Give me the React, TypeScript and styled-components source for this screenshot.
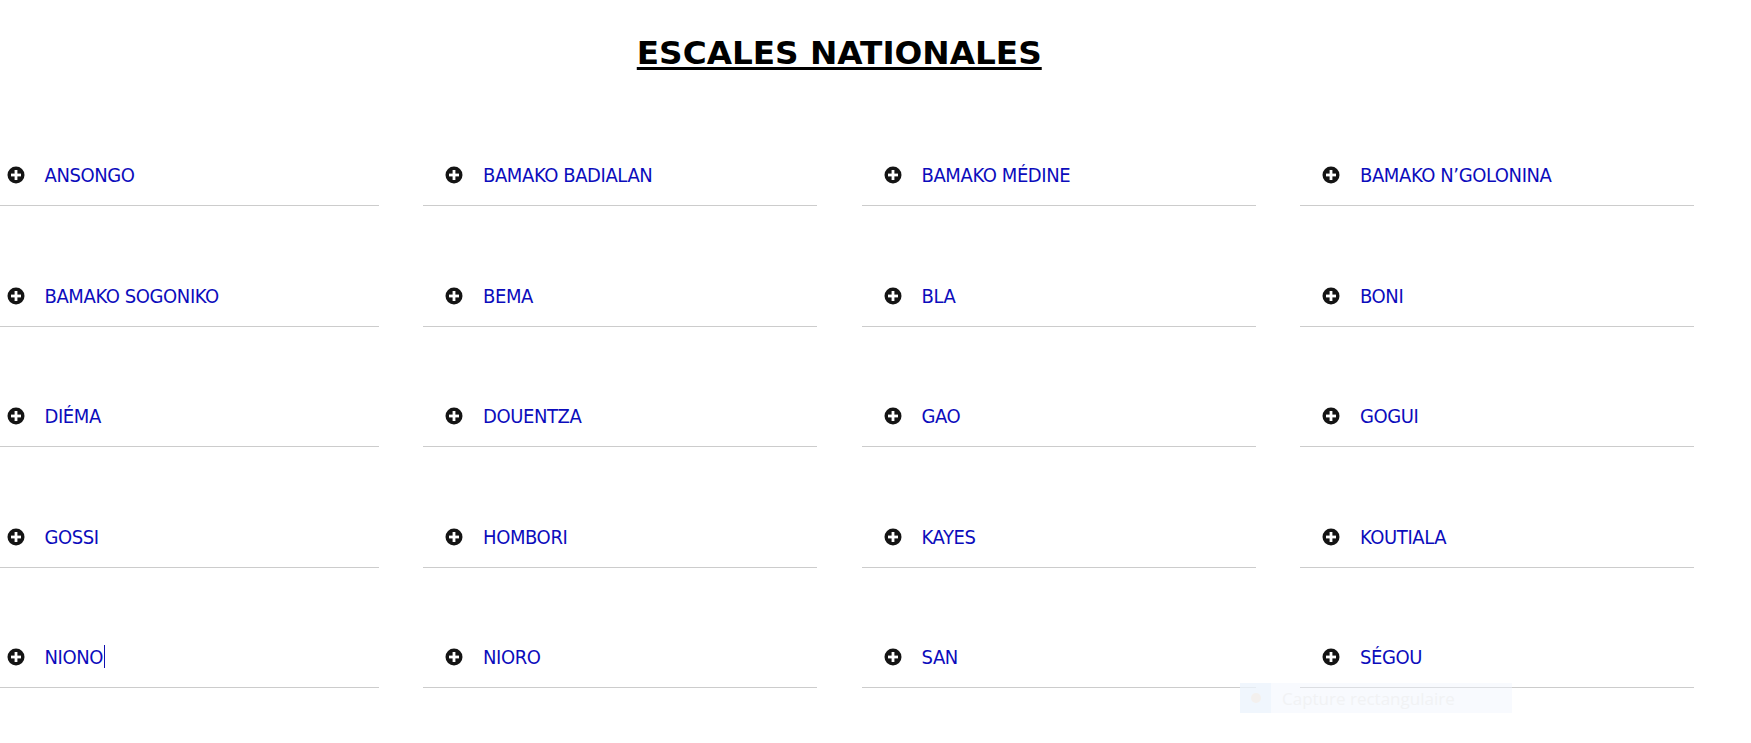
import React from "react";
import styled, { createGlobalStyle } from "styled-components";

const Global = createGlobalStyle`
  html, body { margin: 0; padding: 0; background: #ffffff; }
  body { font-family: "DejaVu Sans", "Liberation Sans", sans-serif; overflow: hidden; }
`;

const Page = styled.div`
  position: relative;
  width: 1751px;
  height: 743px;
  overflow: hidden;
  background: #fff;
`;

const Wrapper = styled.div`
  width: 1709.5px;
  margin-left: -15.5px;
`;

const TitleBar = styled.header`
  height: 85.5px;
  display: flex;
  justify-content: center;
  align-items: flex-start;
  box-sizing: border-box;
  padding-top: 33px;
`;

const Title = styled.h1`
  margin: 0;
  font-family: "DejaVu Sans", sans-serif;
  font-weight: 700;
  font-size: 32.7px;
  line-height: 40px;
  color: #000;
  text-decoration: underline;
  text-decoration-thickness: 3px;
  text-underline-offset: 3px;
`;

const Grid = styled.ul`
  list-style: none;
  margin: 0;
  padding: 0;
  display: grid;
  grid-template-columns: repeat(4, 394px);
  column-gap: 44.5px;
`;

const Item = styled.li`
  height: 59.5px;
  padding-top: 60px;
  border-bottom: 1px solid #cccccc;
  display: flex;
  align-items: center;
`;

const Icon = styled.span`
  width: 18px;
  height: 18px;
  margin-left: 22px;
  margin-right: 20px;
  display: inline-flex;
  flex: none;
`;

const Label = styled.span`
  font-family: "DejaVu Sans", sans-serif;
  font-stretch: condensed;
  font-size: 20px;
  letter-spacing: -0.4px;
  color: #0c0cbc;
  white-space: nowrap;
`;

const Caret = styled.span`
  display: inline-block;
  width: 1px;
  height: 23px;
  background: #1010b0;
  vertical-align: -4px;
  margin-left: 1px;
`;

const Ghost = styled.div`
  position: absolute;
  left: 1240px;
  top: 683px;
  width: 272px;
  height: 30px;
  display: flex;
  align-items: center;
  background: rgba(240, 245, 252, 0.45);
`;

const GhostIconBox = styled.div`
  width: 31px;
  height: 30px;
  background: rgba(235, 243, 252, 0.6);
  display: flex;
  align-items: center;
  justify-content: center;
`;

const GhostDot = styled.div`
  width: 10px;
  height: 10px;
  border-radius: 50%;
  background: #f3f0ee;
`;

const GhostText = styled.span`
  margin-left: 11px;
  font-family: "Open Sans", "Noto Sans", sans-serif;
  font-size: 17px;
  color: #f1f2f4;
`;

const PlusCircle = () => (
  <svg width="18" height="18" viewBox="0 0 18 18">
    <circle cx="9" cy="9" r="8.5" fill="#141414" />
    <rect x="4" y="7.6" width="10" height="2.8" fill="#fff" />
    <rect x="7.6" y="4" width="2.8" height="10" fill="#fff" />
  </svg>
);

const names = [
  "ANSONGO",
  "BAMAKO BADIALAN",
  "BAMAKO MÉDINE",
  "BAMAKO N’GOLONINA",
  "BAMAKO SOGONIKO",
  "BEMA",
  "BLA",
  "BONI",
  "DIÉMA",
  "DOUENTZA",
  "GAO",
  "GOGUI",
  "GOSSI",
  "HOMBORI",
  "KAYES",
  "KOUTIALA",
  "NIONO",
  "NIORO",
  "SAN",
  "SÉGOU",
];

export default function App() {
  return (
    <Page>
      <Global />
      <Wrapper>
        <TitleBar>
          <Title>ESCALES NATIONALES</Title>
        </TitleBar>
        <Grid>
          {names.map((n) => (
            <Item key={n}>
              <Icon>
                <PlusCircle />
              </Icon>
              <Label>
                {n}
                {n === "NIONO" && <Caret />}
              </Label>
            </Item>
          ))}
        </Grid>
      </Wrapper>
      <Ghost>
        <GhostIconBox>
          <GhostDot />
        </GhostIconBox>
        <GhostText>Capture rectangulaire</GhostText>
      </Ghost>
    </Page>
  );
}
